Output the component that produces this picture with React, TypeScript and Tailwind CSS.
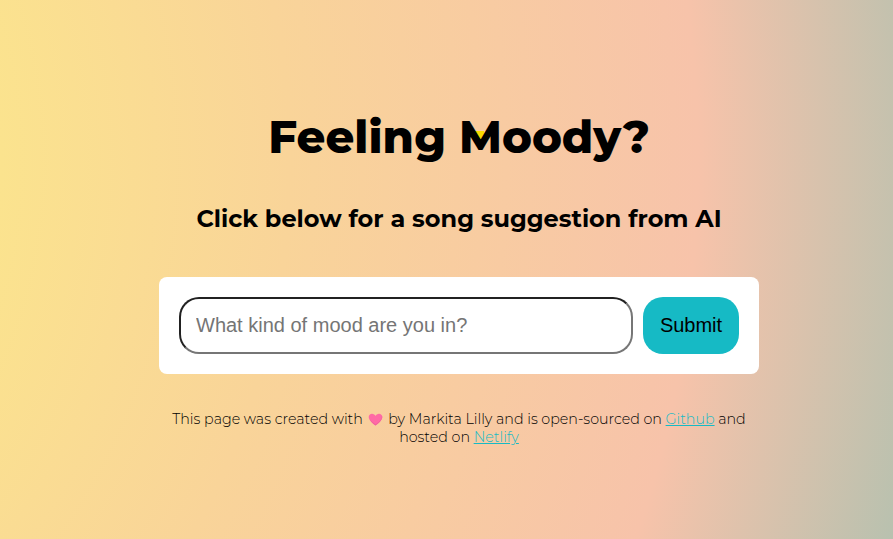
import React from "react";

function Heart() {
  return (
    <svg viewBox="0 0 16 14" className="mr-[2px] ml-px inline h-[13px] w-[15px] align-[-2px]" aria-hidden="true">
      <path d="M8 13.5C5.500 11.600.7 8 .7 4.300.7 2.200 2.300.7 4.200.7 5.900.7 7.300 1.700 8 3.100 8.700 1.700 10.100.7 11.800.7c1.900 0 3.500 1.500 3.500 3.600 0 3.700-4.800 7.300-7.300 9.200Z" fill="#ff6aa5" />
      <path d="M14.500 2.300c1.300 3-1.100 6.100-6.500 9.900-2.500-1.600-4.800-3.600-6.300-5.700C3 9.600 5.700 11.800 8 13.500c2.500-1.900 7.300-5.500 7.300-9.200 0-.8-.3-1.500-.8-2Z" fill="#f0609f" />
    </svg>
  );
}

export default function App() {
  return (
    <main className="flex h-[539px] w-full flex-col items-center overflow-hidden bg-[radial-gradient(circle_at_-470px_162px,#fbe38e_470px,#f9d499_760px,#f7c3aa_1168px,#b8c1af_1415px)] pl-[25px] font-['Montserrat','Open_Sans',sans-serif] text-black">
      <h1 className="relative isolate mt-[107px] flex h-[60px] items-center whitespace-nowrap text-[45px] font-extrabold">
        Feeling Moody?
        <span className="absolute top-[24px] left-[207px] -z-10 h-[9px] w-[9px] bg-[#f8d800]" />
      </h1>
      <h2 className="mt-[36px] flex h-8 items-center whitespace-nowrap text-2xl font-bold">
        Click below for a song suggestion from AI
      </h2>
      <form className="mt-[42px] flex h-[97px] w-[600px] gap-[10px] rounded-lg bg-white p-5 font-['Liberation_Sans',sans-serif] text-xl">
        <input
          className="w-[454px] rounded-[20px] border-2 border-t-[#212121] border-r-[#767676] border-b-[#767676] border-l-[#212121] px-[15px] pb-0.5 placeholder:text-[#757575]"
          placeholder="What kind of mood are you in?"
        />
        <button type="button" className="w-24 rounded-[20px] bg-[#16bac5] pb-0.5">Submit</button>
      </form>
      <footer className="mt-9 w-[600px] text-center text-[14.25px] leading-[18px] font-light">
        This page was created with <Heart /> by Markita Lilly and is open-sourced on <a className="text-[#16bac5] underline">Github</a> and
        <br />
        hosted on <a className="text-[#16bac5] underline">Netlify</a>
      </footer>
    </main>
  );
}
